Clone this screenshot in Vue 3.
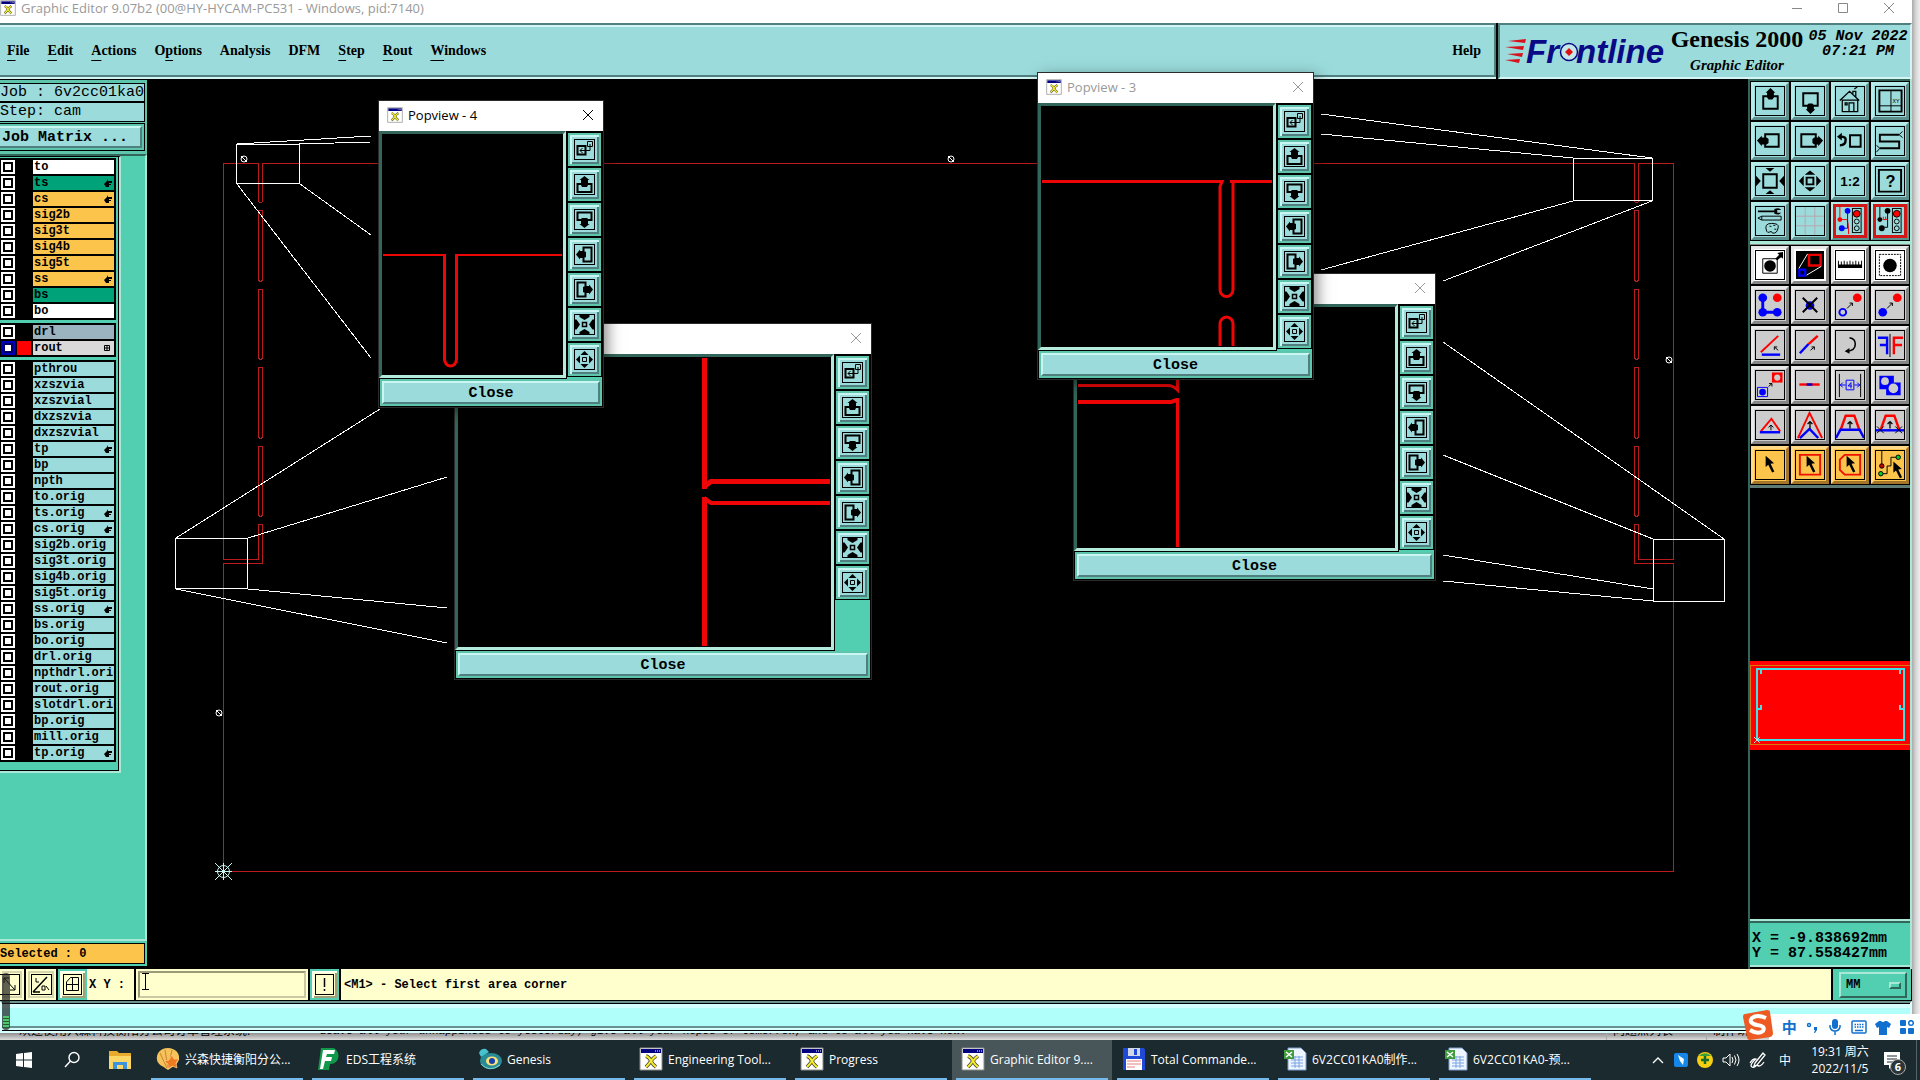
<script setup>
import { ref } from 'vue'

const menus = [
  ['', 'F', 'ile'], ['', 'E', 'dit'], ['', 'A', 'ctions'], ['O', 'p', 'tions'], ['Analysis', '', ''],
  ['DFM', '', ''], ['', 'S', 'tep'], ['', 'R', 'out'], ['', 'W', 'indows'],
]

const layer = (name, color, hand) => ({ name, color, hand })
const layerGroups = ref([
  [
    layer('to', 'white'), layer('ts', 'green', true), layer('cs', 'orange', true), layer('sig2b', 'orange'),
    layer('sig3t', 'orange'), layer('sig4b', 'orange'), layer('sig5t', 'orange'), layer('ss', 'orange', true),
    layer('bs', 'green'), layer('bo', 'white'),
  ],
  [layer('drl', 'steel'), { name: 'rout', color: 'silver', active: true }],
  [
    layer('pthrou'), layer('xzszvia'), layer('xzszvial'), layer('dxzszvia'), layer('dxzszvial'), layer('tp', '', true),
    layer('bp'), layer('npth'), layer('to.orig'), layer('ts.orig', '', true), layer('cs.orig', '', true),
    layer('sig2b.orig'), layer('sig3t.orig'), layer('sig4b.orig'), layer('sig5t.orig'), layer('ss.orig', '', true),
    layer('bs.orig'), layer('bo.orig'), layer('drl.orig'), layer('npthdrl.orig'), layer('rout.orig'),
    layer('slotdrl.orig'), layer('bp.orig'), layer('mill.orig'), layer('tp.orig', '', true),
  ],
])

const slots = [[210, 281], [289, 359], [367, 438], [446, 516]]

const cursor = 'M0 0v11.5l2.7-2.2 4 8 2.3-1.1-3.9-8 3.6-.5z'
const arrow = (x1, y1, x2, y2, hx, hy) =>
  `<path d="M${x1} ${y1}L${x2} ${y2}M${x2 - 3 * hx} ${y2}H${x2}V${y2 - 3 * hy}" fill="none" stroke="#000"/>`
const upArrow = '<path d="M14.5 18v-7M12 13.500l2.500-2.500 2.500 2.500" fill="none" stroke="#000" stroke-width="1.300"/>'
const light = (x) => `<rect x="${x}" y="1.500" width="9" height="25" fill="#9bdbdb" stroke="#000"/><circle cx="${x + 4.5}" cy="7" r="3.500" fill="red" stroke="#000"/><circle cx="${x + 4.5}" cy="15" r="2.500" fill="none" stroke="#000"/><circle cx="${x + 4.5}" cy="22" r="2.500" fill="none" stroke="#000"/>`

const viewTools = [
  ['Pan up', '<path d="M7.500 9.500h15v13h-15z" fill="none" stroke="#000" stroke-width="2"/><path d="M15 1l5 5h-1.500v5l-1.500 2h-4l-1.500-2V6H10z"/>'],
  ['Pan down', '<path d="M7.500 6.500h15v13h-15z" fill="none" stroke="#000" stroke-width="2"/><path d="M15 28l5-5h-1.500v-4l-1.500-2h-4l-1.500 2v4H10z"/>'],
  ['Home', '<path d="M4 14L14 4.500 24 14M6.500 13.500v12h16v-12zM13.500 25.500v-9h5v9M17.500 7V4.500h3V10M9.500 16.500h2v2h-2zM19 2l3-2" fill="none" stroke="#000" stroke-width="1.300"/>'],
  ['XY window', '<path d="M3.500 3.500h23v22h-23z" fill="none" stroke="#000" stroke-width="2"/><path d="M15.500 3v22M3 19.500h23" stroke="#000"/><text x="17" y="17" font-size="6" font-family="Liberation Mono">XY</text>'],
  ['Pan left', '<path d="M9.500 7.500h14v13h-14z" fill="none" stroke="#000" stroke-width="2"/><path d="M1 14l5-5v2h5l2 1.500v4l-2 1.500H6v2z"/>'],
  ['Pan right', '<path d="M5.500 7.500h15v13h-15z" fill="none" stroke="#000" stroke-width="2"/><path d="M28 14l-5-5v2h-4l-2 1.500v4l2 1.500h4v2z"/>'],
  ['Previous view', '<path d="M14.500 8.500h11v12h-11z" fill="none" stroke="#000" stroke-width="2"/><path d="M4 19q6 0 6-6 0-3-5-3" fill="none" stroke="#000" stroke-width="2.500"/><path d="M1 10l5-4v8z"/>'],
  ['Route', '<path d="M24 8H4v7h20v7H4" fill="none" stroke="#000" stroke-width="2"/><path d="M27.500 4.500L24 8l3.500 3M.500 19l3.500 3-3.500 4" fill="none" stroke="#000"/>'],
  ['Zoom in', '<path d="M7.500 7.500h14v14h-14z" fill="none" stroke="#000" stroke-width="2"/><path d="M10 1h9l-4.500 4zM10 28h9l-4.500-4zM0 9l5 5.500L0 20zM29 9l-5 5.500 5 5.500z"/>'],
  ['Zoom out', '<path d="M11 11h7v7h-7z" fill="none" stroke="#000" stroke-width="2"/><path d="M9 8h11l-5.500-4.500zM9 21h11l-5.500 4.500zM8 9l-5 5.500L8 20zM21 9l5 5.500-5 5.500z"/>'],
  ['Scale', '<text x="14.500" y="20" text-anchor="middle" font-size="14" font-weight="bold" font-family="Liberation Sans">1:2</text>'],
  ['Help', '<path d="M3 3h23v22.500H3z" fill="none" stroke="#000" stroke-width="2"/><text x="15" y="21" text-anchor="middle" font-size="17" font-weight="bold" font-family="Liberation Sans">?</text>'],
  ['Setup', '<path d="M2 3.500h17v2H2zM19 2q5-2 7 1h-4v3h4q-2 3-7 1z"/><path d="M2 11.500l4-2h20v4H6zM6 9.500v4M11 25q-3-8 5-8 8 0 7 4-1 7-6 6-1-3-3-1-2 1-3-1zM14 20h2M18 19h2M19 23h2" fill="none" stroke="#000"/>'],
  ['Grid', '<path d="M9.500 0v29M19.500 0v29M0 9.500h29M0 19.500h29" stroke="#b9a5ad"/>'],
  ['Net on', '<path d="M4 0v13h7q2 1 2 15" fill="none" stroke="red"/><path d="M12 5v17H6" fill="none" stroke="#00f"/><circle cx="12" cy="4" r="3" fill="#00f"/><circle cx="6" cy="22" r="3" fill="#00f"/><circle cx="4" cy="13" r="2.500" fill="red"/>' + light(17), 'alert'],
  ['Net check', '<path d="M4 0v13M12 4v17H6" fill="none" stroke="#000"/><path d="M7 13h5M7.500 10v3M10 10v3" stroke="red"/><circle cx="12" cy="4" r="3"/><circle cx="6" cy="22" r="3"/><circle cx="4" cy="13" r="2.500"/>' + light(17), 'alert'],
]

const editTools = [
  ['Select feature', '<path d="M7 8h15v15H7z" fill="none" stroke="#000"/><circle cx="14.500" cy="15.500" r="6"/><path d="M20 8l4-4-2-2 6-1v7l-2-1.500-4 3z"/>', 'white'],
  ['Popview', '<path d="M0 0h29v29H0z"/><path d="M13.500 4h12v11h-12z" fill="none" stroke="#e00" stroke-width="2.500"/><path d="M3.500 19.500h6v6h-6z" fill="none" stroke="#00f" stroke-width="2.500"/><path d="M3 18L12 3M11 25l15-9" stroke="#fff"/>', 'white bare'],
  ['Measure', '<path d="M2 17.500V10h1v4h2v-3h1v3h2v-4h1v4h2v-3h1v3h2v-4h1v4h2v-3h1v3h2v-4h1v4h2v-3h1v3h2v-4h1v7.500z"/>', 'white'],
  ['Highlight', '<path d="M3.500 3.500h22v22h-22z" fill="none" stroke="#000" stroke-dasharray="2 1"/><circle cx="14.500" cy="15" r="7"/>', 'white'],
  ['Connect', '<path d="M7 7v15h15" fill="none" stroke="#00f" stroke-width="3"/><circle cx="7" cy="7" r="4.500" fill="#00f"/><circle cx="7" cy="22" r="4.500" fill="#00f"/><circle cx="22" cy="22" r="4.500" fill="#00f"/><circle cx="22" cy="7" r="4.500" fill="red"/>'],
  ['Delete', '<circle cx="14.500" cy="15" r="4.500" fill="#00d"/><path d="M7 7l15 15M22 7L7 22" stroke="#000" stroke-width="2"/>'],
  ['Move', '<circle cx="22" cy="7" r="4.500" fill="red"/><circle cx="7" cy="22" r="3.500" fill="none" stroke="#00f" stroke-width="2"/>' + arrow(11.5, 18, 17, 12.5, 1, -1)],
  ['Copy', '<circle cx="22" cy="7" r="4.500" fill="red"/><circle cx="7" cy="22" r="4.500" fill="#00f"/>' + arrow(11.5, 18, 17, 12.5, 1, -1)],
  ['Rotate', '<path d="M5 22L23 5" stroke="red" stroke-width="2"/><path d="M6 24.500h19" stroke="#00f" stroke-width="2.500"/>' + arrow(23, 20, 19, 16.5, -1, -1)],
  ['Stretch', '<path d="M4 23l9-9.500" stroke="#00f" stroke-width="2.500"/><path d="M13 13.500L22.500 5" stroke="red" stroke-width="2.500"/>' + arrow(15, 20, 19, 16.5, 1, -1)],
  ['Turn', '<path d="M14 7q6 1 6 6.500 0 7-9 7.500" fill="none" stroke="#000" stroke-width="1.600"/><path d="M9 21l5-3.500v6z"/>'],
  ['Mirror', '<path d="M2 7h9.500v17M4 14.500h8" fill="none" stroke="#00f" stroke-width="2.500"/><path d="M14.500 3v24" stroke="#000"/><path d="M18.500 24V7H28M18.500 14.500H27" fill="none" stroke="red" stroke-width="2.500"/>'],
  ['Change', '<path d="M1.500 17h10.500v9.500H1.500z" fill="none" stroke="#00f"/><circle cx="6.800" cy="21.800" r="3.500" fill="#00f"/><path d="M16.500 1.500h11v10.500h-11z" fill="red"/><circle cx="22" cy="6.800" r="3.200" fill="#ccc"/>' + arrow(13, 16, 16.5, 13, 1, -1)],
  ['Break', '<path d="M3.500 14h21" stroke="red" stroke-width="2.500"/><path d="M11 14h6" stroke="#00c" stroke-width="2.500"/>'],
  ['Spacing', '<path d="M3.500 3v24M25.500 3v24" stroke="#000"/><path d="M10.500 9.500h8v10h-8zM4 14.500h6M19 14.500h6M7 12l-2.500 2.500L7 17M22 12l2.500 2.500L22 17M15.500 18v-6l-3 3.500h4" fill="none" stroke="#00f"/>'],
  ['Boolean', '<path d="M3.500 5h15v7h7v13h-15v-6h-7z" fill="#00f"/><circle cx="9.300" cy="10.500" r="4" fill="#ccc"/><circle cx="18" cy="18" r="5" fill="#ccc"/>'],
  ['Line angle', '<path d="M5 21L16 8l9 13" fill="none" stroke="red" stroke-width="2"/><path d="M4 22h21" stroke="#00f" stroke-width="2.500"/><path d="M15.500 20v-5M13 17l2.500-2.500L18 17" fill="none" stroke="#000"/>'],
  ['Line peak', '<path d="M2 28L14 2l13 26" fill="none" stroke="red" stroke-width="2"/><path d="M4 28l10-9.500L23 28" fill="none" stroke="#00f" stroke-width="2.500"/>' + upArrow],
  ['Line trapeze', '<path d="M5 19l5-14h9l5 14" fill="none" stroke="red" stroke-width="2.500"/><path d="M0 28l4.500-8.500h20L29 28" fill="none" stroke="#00f" stroke-width="2.500"/>' + upArrow],
  ['Line cut', '<path d="M5 19l5-14h9l5 14" fill="none" stroke="red" stroke-width="2.500"/><path d="M0 20h29" stroke="#00f" stroke-width="2.500"/><path d="M1 16l7 7M8 16l-7 7M20 16l7 7M27 16l-7 7" stroke="#000"/>' + upArrow],
  ['Single select', `<path transform="translate(10 5)" d="${cursor}"/>`, 'orange'],
  ['Frame select', `<path d="M4 4h21v20.500H4z" fill="none" stroke="#e10" stroke-width="2"/><path transform="translate(11 5)" d="${cursor}"/>`, 'orange'],
  ['Polygon select', `<path d="M9 4h16v20.500H9l-5-5V9z" fill="none" stroke="#e10" stroke-width="2"/><path transform="translate(11 5)" d="${cursor}"/>`, 'orange'],
  ['Net select', `<path d="M6 0v15M5 23.500h6.500v-8h4v-9H23" fill="none" stroke="#000"/><circle cx="6" cy="15.500" r="2.300" fill="#c00" stroke="#000"/><circle cx="5" cy="23.500" r="2.300" fill="#0c3" stroke="#000"/><circle cx="23" cy="6.500" r="2.300" fill="#0c3" stroke="#000"/><path transform="translate(18 11)" d="${cursor}"/>`, 'orange'],
]

const popTools = [
  ['Link', '<path d="M2.500 6h8v8.500h-8z" fill="none" stroke="#000" stroke-width="2"/><path d="M12.500 1.500h5v5h-5zM15 4v6.500H5M7.500 8L5 10.500 7.500 13" fill="none" stroke="#000"/>'],
  ['Pan up', '<path d="M6 9H2.500v8h14V9H13" fill="none" stroke="#000" stroke-width="2"/><path d="M9.500 1l5 4H13v5l-1 2H7l-1-2V5H4.500z"/>'],
  ['Pan down', '<path d="M6 10H2.500V2.500h14V10H13" fill="none" stroke="#000" stroke-width="2"/><path d="M9.500 18l5-4H13V9l-1-1H7L6 9v5H4.500z"/>'],
  ['Pan left', '<path d="M8.500 6V2.500h8v14h-8V13" fill="none" stroke="#000" stroke-width="2"/><path d="M1 9.500l4-5V6h4l2 1v5l-2 1H5v1.500z"/>'],
  ['Pan right', '<path d="M10.500 6V2.500h-8v14h8V13" fill="none" stroke="#000" stroke-width="2"/><path d="M18 9.500l-4-5V6h-4L8 7v5l2 1h4v1.500z"/>'],
  ['Zoom in', '<path d="M7.500 7.500h4v4h-4z" fill="none" stroke="#000" stroke-width="1.500"/><path d="M4.500 0h10v2l-5 3-5-3zM4.500 19h10v-2l-5-3-5 3zM0 4.500h1.500l3.500 5-3.500 5H0zM19 4.500h-1.500l-3.500 5 3.500 5H19z"/>'],
  ['Zoom out', '<path d="M7.500 7.500h4v4h-4z" fill="none" stroke="#000"/><path d="M5.500 5h8l-4-4zM5.500 14h8l-4 4zM5 5.500v8l-4-4zM14 5.500v8l4-4z"/>'],
]

const popviews = ref([
  { id: 1, title: 'Popview - 1', x: 1074, y: 274, w: 361, h: 248, active: false,
    art: '<path d="M1078 385.500h90q5 0 9.500 4.500V300M1177.500 398v149" stroke-width="3"/><path d="M1078 402h93l6-2" stroke-width="4"/>' },
  { id: 2, title: 'Popview - 2', x: 455, y: 324, w: 416, h: 297, active: false,
    art: '<path d="M704.500 358v131M704.500 497v149M705 486l6-4.500h119" stroke-width="5"/><path d="M704 498l7 5h119" stroke-width="4"/>' },
  { id: 3, title: 'Popview - 3', x: 1038, y: 73, w: 275, h: 248, active: false,
    art: '<path d="M1042 181.500h180l-2 5v103a6.500 7 0 0 0 13 0V181M1230 181.500h42M1220 346v-22a6.500 7 0 0 1 13 0v22" stroke-width="3"/>' },
  { id: 4, title: 'Popview - 4', x: 379, y: 101, w: 224, h: 248, active: true,
    art: '<path d="M383 255h62M455 255h107" stroke-width="2"/><path d="M444.500 254v105a6 7 0 0 0 12 0V254" stroke-width="3"/>' },
])
const closePopview = (id) => {
  popviews.value = popviews.value.filter((p) => p.id !== id)
}

const tasks = [
  { icon: 'shell', text: '兴森快捷衡阳分公...' },
  { icon: 'eds', text: 'EDS工程系统' },
  { icon: 'genesis', text: 'Genesis' },
  { icon: 'x', text: 'Engineering Tool...' },
  { icon: 'x', text: 'Progress' },
  { icon: 'x', text: 'Graphic Editor 9....', active: true },
  { icon: 'floppy', text: 'Total Commande...' },
  { icon: 'sheet', text: '6V2CC01KA0制作...' },
  { icon: 'sheet', text: '6V2CC01KA0-预...' },
]
const taskIcons = {
  shell: '<path d="M12 1C4 1 0 7 1 13c1 5 6 6 8 8l3 2 3-2c3-2 7-4 8-9C24 6 19 1 12 1z" fill="#f6c25b"/><path d="M11 21L4 6M12 21L9 3M12 21l4-18" stroke="#c98427" fill="none"/><path d="M16 8l2 4 5 0-3 4 1 5-5-2-4 3 0-5-4-3 5-1z" fill="#ef7a1f" stroke="#fbd08a" stroke-width=".7"/>',
  eds: '<path d="M4 1h13q6 4 4 11-2 5-8 5l-1 6H1z" fill="#12984b"/><path d="M6 3h12l-1 4h-7l-1 3h6l-1 4H8l-2 8H3z" fill="#fff"/>',
  genesis: '<ellipse cx="13" cy="14" rx="11" ry="8" fill="#2a8b96"/><ellipse cx="14" cy="14" rx="6" ry="4.500" fill="#fbe27a"/><circle cx="14" cy="14" r="3" fill="#1b3fae"/><path d="M1 6q2-5 7-4l3 3-8 5z" fill="#46c1cf"/><path d="M3 17q8 9 19 1" stroke="#7fe0d5" fill="none"/>',
  x: '<path d="M1 1h22v22H1z" fill="#fff" stroke="#8a8a8a"/><path d="M2 2h20v4H2z" fill="#000080"/><path d="M16 4h1M18 4h1M20 4h1" stroke="#fff"/><path d="M7 9q3 1 5 5t5 6M17 9q-3 2-5 5t-5 6" stroke="#333" stroke-width="3.500" fill="none"/><path d="M7 9q3 1 5 5t5 6M17 9q-3 2-5 5t-5 6" stroke="#f2ea2a" stroke-width="2.200" fill="none"/>',
  floppy: '<path d="M1 1h21l1 2v20H1z" fill="#2149d8"/><path d="M6 1h12v8H6z" fill="#cfd6e6"/><path d="M12 2h3v6h-3z" fill="#2149d8"/><path d="M4 12h16v11H4z" fill="#fff"/><path d="M5 14h14M5 17h14M5 20h8" stroke="#e58080"/>',
  sheet: '<path d="M5 1h13l5 5v17H5z" fill="#eef5ff" stroke="#7c9ccb"/><path d="M8 10h12M8 13h12M8 16h12M8 19h12M12 9v12M16 9v12" stroke="#7aa5e0"/><path d="M1 3h10v9H1z" fill="#3f9b3c"/><path d="M3 5l6 5M9 5l-6 5" stroke="#fff" stroke-width="1.500"/>',
}
const units = ref('MM')
const xy = ref('')
</script>

<template>
  <div class="desktop">
    <div class="screen">
      <div class="editor">
        <header class="titlebar">
          <svg class="app-icon" viewBox="0 0 24 24" v-html="taskIcons.x"></svg>
          <h1>Graphic Editor 9.07b2 (00@HY-HYCAM-PC531 - Windows, pid:7140)</h1>
          <div class="win-buttons">
            <button aria-label="Minimize"><svg width="12" height="12"><path d="M1 6.500h10" stroke="#888" /></svg></button>
            <button aria-label="Maximize"><svg width="12" height="12"><path d="M1.500 1.500h9v9h-9z" fill="none" stroke="#888" /></svg></button>
            <button aria-label="Close window"><svg width="12" height="12"><path d="M1 1l10 10M11 1L1 11" stroke="#888" /></svg></button>
          </div>
        </header>

        <div class="top">
          <nav class="menubar">
            <button v-for="m in menus" :key="m.join('')">{{ m[0] }}<u>{{ m[1] }}</u>{{ m[2] }}</button>
            <button class="help">Help</button>
          </nav>
          <div class="brand">
            <div class="logo">
              <svg width="24" height="26" fill="#d8121c"><path d="M3 2l18-2-1 4zM0 8l19-1-1 4zM2 15l16-1-1 4zM0 21l15-1-1 4z" /></svg>
              <span>Fr</span>
              <svg width="20" height="20"><circle cx="10" cy="10" r="8.500" fill="#c4e8ea" stroke="#0a0a86" stroke-width="1.500" /><path d="M10 6l4 4-4 4-4-4z" fill="#e01010" /></svg>
              <span>ntline</span>
            </div>
            <div class="product"><strong>Genesis 2000</strong><em>Graphic Editor</em></div>
            <time>05 Nov 2022<br>07:21 PM</time>
          </div>
        </div>

        <main class="workspace">
          <aside class="layers">
            <div class="job">
              <p>Job : 6v2cc01ka0</p>
              <p>Step: cam</p>
              <div class="matrix"><button>Job Matrix ...</button></div>
            </div>
            <div class="layer-area">
              <div class="layer-list">
                <ul v-for="(group, g) in layerGroups" :key="g">
                  <li v-for="l in group" :key="l.name">
                    <input :id="'layer-' + l.name" type="checkbox" :class="{ active: l.active }">
                    <span class="swatch" :class="{ active: l.active }"></span>
                    <label :for="'layer-' + l.name" :class="l.color">
                      {{ l.name }}
                      <svg v-if="l.hand" width="8" height="8"><path d="M0 5l3-3 1-2v2h4v2H5v1h2v1H5v2H2z" /></svg>
                      <svg v-if="l.active" width="8" height="8"><path d="M.500 1.500h5v5h-5zM3 1v6M0 4h6" fill="none" stroke="#000" /></svg>
                    </label>
                  </li>
                </ul>
              </div>
            </div>
            <p class="selected">Selected : 0</p>
          </aside>

          <section class="canvas">
            <svg class="drawing" shape-rendering="crispEdges">
              <g transform="translate(-147 -79)" fill="none">
                <g stroke="#b81c1c">
                  <path d="M223.500 560V163.500H258.500V201l1 1.500h2l1-1.500V163.500H1634.500V201l1 1.500h2l1-1.500V163.500H1673.500V560M223.500 564V871.500H1673.500V564" />
                  <template v-for="x in [258.5, 1634.5]" :key="x">
                    <path v-for="s in slots" :key="s[0]" :d="`M${x} ${s[0] + 1}l1-1h2l1 1V${s[1] - 1}l-1 1h-2l-1-1z`" />
                  </template>
                  <path d="M223 559.500H258.500V525l1-1h2l1 1V563.500H223M1674 559.500H1638.500V525l-1-1h-2l-1 1V563.500H1674" />
                </g>
                <g stroke="#fff">
                  <path d="M236.500 144.500h63v39h-63zM175.500 538.500h72v50h-72zM1573.500 158.500h79v42h-79zM1653.500 539.500h71v62h-71z" />
                  <path d="M237 144L371 136M299 144L371 142M237 184L371 358M300 184L371 235" />
                  <path d="M176 538L380 409M248 538L447 477M176 589L447 643M248 589L447 608" />
                  <path d="M1652 158L1321 114M1573 158L1321 134M1573 201L1321 270M1652 201L1443 281" />
                  <path d="M1724 539L1443 342M1653 539L1443 455M1653 589L1443 555M1653 601L1443 581" />
                </g>
                <g stroke="#fff" shape-rendering="auto">
                  <g v-for="p in [[244, 159], [951, 159], [219, 713], [1669, 360]]" :key="p[0]" :transform="`translate(${p[0]} ${p[1]})`">
                    <circle r="3" /><path d="M-3-3l6 6" />
                  </g>
                </g>
                <g stroke="#c8f4f4" shape-rendering="auto">
                  <circle cx="223.500" cy="871.500" r="6" />
                  <path d="M223.500 863v17M215 871.500h17M215 863l17 17M232 863l-17 17" />
                </g>
              </g>
            </svg>
          </section>

          <aside class="tools">
            <div class="palette view">
              <button v-for="t in viewTools" :key="t[0]" :aria-label="t[0]" :class="t[2]"><svg viewBox="0 0 29 29" v-html="t[1]"></svg></button>
            </div>
            <div class="palette edit">
              <button v-for="t in editTools" :key="t[0]" :aria-label="t[0]" :class="t[2]"><svg viewBox="0 0 29 29" v-html="t[1]"></svg></button>
            </div>
            <div class="overview">
              <svg width="160" height="89" shape-rendering="crispEdges">
                <path d="M0 0h160v89H0z" fill="red" />
                <path d="M0 4.500h160M.500 4v79.500H160" fill="none" stroke="#d87a10" />
                <path d="M7 8h147v71H7zM11 9v4M150 9v4M7 48h4v-4M154 48h-4v-4" fill="none" stroke="#45dfe6" stroke-width="2" />
                <path d="M4 76l6 6M10 76l-6 6" stroke="#cdd" />
              </svg>
            </div>
            <div class="coords">X = -9.838692mm<br>Y = 87.558427mm</div>
          </aside>
        </main>

        <div class="status">
          <button class="cream cut" aria-label="Snap ends"><svg width="19" height="19"><path d="M4 3l11 12M4 8V3h5M10 15h5v-5" fill="none" stroke="#000" /></svg></button>
          <button class="cream" aria-label="Snap off"><svg width="19" height="19"><path d="M1 17L15 2M1 17h7" fill="none" stroke="#000" stroke-width="1.500" /><path d="M4 3v4h3M10 11h3v4h-3zM14 11l3 4" fill="none" stroke="#000" /></svg></button>
          <button aria-label="Snap grid"><svg width="17" height="19"><path d="M2.500 7l4-4.500h8v13h-12zM8.500 2v14M2 9.500h13" fill="none" stroke="#000" /></svg></button>
          <label for="xy">X Y :</label>
          <div class="xy"><input id="xy" v-model="xy" type="text"><svg class="beam" width="7" height="17"><path d="M0 .500h7M0 16.500h7M3.500 0v17" stroke="#000" /></svg></div>
          <button aria-label="Message"><svg width="17" height="19"><path d="M8.500 3v9M8.500 14v2" stroke="#000" stroke-width="1.500" /></svg></button>
          <output>&lt;M1&gt; - Select first area corner</output>
          <div class="units">
            <select v-model="units" aria-label="Units"><option>MM</option><option>INCH</option></select>
            <i></i>
          </div>
        </div>
        <div class="message"></div>
      </div>
      <div class="edge"></div>

      <section v-for="p in popviews" :key="p.id" class="popview" :class="{ current: p.active }"
        :style="{ left: p.x + 'px', top: p.y + 'px', width: p.w + 'px' }">
        <header>
          <svg class="app-icon" viewBox="0 0 24 24" v-html="taskIcons.x"></svg>
          <h2>{{ p.title }}</h2>
          <button aria-label="Close popview" @click="closePopview(p.id)"><svg width="12" height="12"><path d="M1 1l10 10M11 1L1 11" stroke="currentColor" /></svg></button>
        </header>
        <div class="pop-body" :style="{ height: p.h + 'px' }">
          <div class="pop-canvas">
            <svg><g :transform="`translate(${-p.x - 3} ${-p.y - 33})`" fill="none" stroke="#ee0606" v-html="p.art"></g></svg>
          </div>
          <div class="pop-tools">
            <button v-for="t in popTools" :key="t[0]" :aria-label="t[0]"><svg viewBox="0 0 19 19" v-html="t[1]"></svg></button>
          </div>
        </div>
        <div class="pop-close"><button @click="closePopview(p.id)">Close</button></div>
      </section>

      <div class="level"><span></span></div>
    </div>

    <div class="behind">
      <span class="greet">欢迎使用兴森科技衡阳分公司订单管理系统!</span>
      <em>Leave all your unhappiness to yesterday, give all your hopes of tomorrow, and to all you have now.</em>
      <span class="tab">问题点列表</span>
      <span class="tab">制作研</span>
    </div>

    <footer class="taskbar">
      <button class="sys" aria-label="Start"><svg width="16" height="16" fill="#fff"><path d="M0 2l7-1v6.500H0zM8 1l8-1v7.500H8zM0 8.500h7V15l-7-1zM8 8.500h8V16l-8-1z" /></svg></button>
      <button class="sys" aria-label="Search"><svg width="18" height="18" fill="none" stroke="#fff" stroke-width="1.400"><circle cx="11" cy="6.500" r="5" /><path d="M7.500 10L2 16" /></svg></button>
      <button class="sys" aria-label="Explorer"><svg width="24" height="20"><path d="M1 1h8l2 2h12v16H1z" fill="#e8ab2c" /><path d="M1 6h22v13H1z" fill="#fcd768" /><path d="M5 19v-7h14v7h-4v-4h-6v4z" fill="#3f93dd" /></svg></button>
      <button v-for="t in tasks" :key="t.text" class="task" :class="{ active: t.active }">
        <svg width="24" height="24" v-html="taskIcons[t.icon]"></svg><span>{{ t.text }}</span>
      </button>
      <div class="tray">
        <svg width="14" height="20" fill="none" stroke="#fff" stroke-width="1.300"><path d="M2 13l5-5 5 5" /></svg>
        <svg width="14" height="14"><rect width="14" height="14" rx="2" fill="#1687ea" /><path d="M4 2l6 4-1 6-3-4z" fill="#fff" /></svg>
        <svg width="16" height="16"><circle cx="8" cy="8" r="8" fill="#f4cf12" /><path d="M2 4a8 8 0 0 1 12 0z" fill="#3aa03a" /><path d="M8 4v8M4 8h8" stroke="#156b2b" stroke-width="2.500" /></svg>
        <svg width="18" height="16" fill="none" stroke="#fff"><path d="M1 6h3l4-4v12l-4-4H1zM10 5q2 3 0 6M12.500 3.500q3 4.500 0 9M15 2q4 6 0 12" /></svg>
        <svg width="18" height="18" fill="none" stroke="#fff" stroke-width="1.300"><path d="M6 12L14 2l2 2-8 10-3 1zM1 12q3-5 6-4-5 4-5 7 2 3 6-1 3 3 7-3" /></svg>
        <span class="ime">中</span>
        <div class="clock">19:31 周六<br>2022/11/5</div>
        <div class="notice">
          <svg width="16" height="17"><path d="M0 0h16v13H9l-4 4v-4H0z" fill="#fff" /><path d="M3 4h10M3 7h10M3 10h6" stroke="#1b2a30" /></svg>
          <b>6</b>
        </div>
      </div>
    </footer>

    <div class="sogou">
      <svg width="30" height="32"><path d="M2 5l22-4q3 0 3 2l3 21q0 3-3 4L7 31q-3 0-3-3L0 8q0-3 2-3z" fill="#ee5a24" /><path d="M23 9Q14 5 9 9q-4 5 5 7 9 1 6 6-5 4-13-1" fill="none" stroke="#fff" stroke-width="4" /></svg>
      <span>中</span>
      <svg width="14" height="14" fill="#1170cf"><circle cx="4" cy="5" r="1.500" fill="none" stroke="#1170cf" stroke-width="1.500" /><path d="M9 7h3v3l-2 3H9l1-3H9z" /></svg>
      <svg width="14" height="16" fill="#1170cf"><rect x="4" width="6" height="10" rx="3" /><path d="M2 6v2q1 4 5 4t5-4V6M7 12v4" fill="none" stroke="#1170cf" stroke-width="1.500" /></svg>
      <svg width="16" height="14" fill="none" stroke="#1170cf"><rect x="1" y="1" width="14" height="12" rx="1" stroke-width="1.500" /><path d="M3.500 4.500h9M3.500 7h9" stroke-width="1.500" stroke-dasharray="1.500 1" /><path d="M4 10.500h8" stroke-width="1.500" /></svg>
      <svg width="16" height="15" fill="#1170cf"><path d="M4 1h2q2 2 4 0h2l4 3-2 4-2-1v8H4V7L2 8 0 4z" /></svg>
      <svg width="14" height="14" fill="#1170cf"><rect width="6" height="6" rx="1" /><rect y="8" width="6" height="6" rx="1" /><rect x="8" y="8" width="6" height="6" rx="1" /><circle cx="11" cy="3" r="2.300" fill="none" stroke="#1170cf" stroke-width="1.500" /></svg>
    </div>
  </div>
</template>

<style>
body {
  margin: 0;
  overflow: hidden;
}
</style>

<style scoped>
.desktop {
  --aqua: #9bdbdb;
  --aqua-hi: #c9f6f2;
  --aqua-lo: #4f7f7f;
  --green: #52ceb0;
  --green-hi: #a9e8d6;
  --green-lo: #33665a;
  --mono: "Liberation Mono", monospace;
  position: relative;
  display: flex;
  flex-direction: column;
  height: 100vh;
  overflow: hidden;
  font-family: "Open Sans", "Noto Sans CJK SC", sans-serif;
  font-size: 12px;
  color: #000;
}

.desktop * {
  box-sizing: border-box;
}

button, input, select {
  margin: 0;
  padding: 0;
  border: 0;
  border-radius: 0;
  background: none;
  color: inherit;
  font: inherit;
}

h1, h2, p, ul {
  margin: 0;
  padding: 0;
  font-weight: normal;
}

svg {
  flex: none;
  display: block;
}

.screen {
  position: relative;
  flex: 1;
  min-height: 0;
  display: flex;
}

.editor {
  flex: 1;
  min-width: 0;
  display: flex;
  flex-direction: column;
  background: #000;
}

.edge {
  width: 8px;
  background: linear-gradient(90deg, #aaa, #d8d8d8 50%, #eee);
}

/* window title */
.titlebar {
  height: 23px;
  display: flex;
  align-items: center;
  padding-bottom: 8px;
  background: #fff;
  color: #999;
}

.app-icon {
  width: 16px;
  height: 16px;
}

.titlebar h1 {
  flex: 1;
  margin-left: 5px;
  font-size: 13px;
}

.win-buttons {
  display: flex;
  gap: 34px;
  padding-right: 17px;
}

/* menu and brand */
.top {
  display: flex;
  height: 56px;
}

.menubar, .brand {
  border: 2px solid;
  border-color: var(--aqua-lo) var(--aqua-lo) var(--aqua-lo) var(--aqua);
  box-shadow: inset 0 2px #d3f6f4, 0 2px #d3f6f4;
  background: var(--aqua);
}

.menubar {
  flex: 1;
  display: flex;
  align-items: center;
  gap: 18px;
  height: 54px;
  padding: 2px 13px 0 7px;
  border-left: 0;
  font: bold 14px "Liberation Serif", serif;
}

.menubar u {
  text-underline-offset: 5px;
}

.help {
  margin-left: auto;
}

.brand {
  display: flex;
  width: 414px;
  height: 56px;
  margin-left: 2px;
  padding-left: 5px;
  border-left-color: var(--aqua-lo);
  border-right-color: #d3f6f4;
  border-bottom-color: #d3f6f4;
  box-shadow: none;
}

.logo {
  display: flex;
  align-items: center;
  width: 160px;
  height: 54px;
  color: #0a0a86;
  font: italic bold 33px "Liberation Sans", sans-serif;
}

.logo svg + span {
  margin-left: -3px;
}

.product {
  display: flex;
  flex-direction: column;
  align-items: center;
  width: 138px;
  margin-left: 3px;
  padding-top: 1px;
  font-family: "Liberation Serif", serif;
  line-height: 26px;
}

.product strong {
  font-size: 24px;
  white-space: nowrap;
}

.product em {
  font-weight: bold;
  font-size: 15px;
}

.brand time {
  flex: 1;
  margin-top: 4px;
  font: italic bold 15px/15px var(--mono);
  text-align: center;
  white-space: nowrap;
}

/* left column */
.workspace {
  flex: 1;
  min-height: 0;
  display: flex;
}

.layers {
  width: 147px;
  display: flex;
  flex-direction: column;
  margin-bottom: 3px;
  background: var(--green);
}

.job {
  padding: 3px 2px 3px 0;
  border-top: 1px solid #000;
  background: #5fc4ac;
  font: bold 15px/17px var(--mono);
  white-space: pre;
}

.job p {
  height: 19px;
  border: 1px solid #000;
  border-width: 1px 1px 1px 0;
  background: var(--aqua);
}

.job p + p {
  height: 20px;
}

.matrix {
  height: 28px;
  margin-top: 1px;
  padding: 2px 2px 2px 0;
  border: 1px solid #000;
  border-left: 0;
}

.matrix button {
  width: 100%;
  height: 22px;
  padding-left: 2px;
  border: 2px solid;
  border-color: var(--aqua-hi) var(--aqua-lo) var(--aqua-lo) var(--aqua-hi);
  border-left: 0;
  background: var(--aqua);
  text-align: left;
}

.layer-area {
  flex: 1;
  border-top: 2px solid var(--green-lo);
  border-right: 2px solid var(--green-hi);
  border-bottom: 2px solid var(--green-hi);
}

.layer-list {
  width: 121px;
  padding: 1px 2px 9px 0;
  border-top: 1px solid #000;
  border-right: 2px solid var(--green-hi);
  border-bottom: 2px solid var(--green-hi);
  box-shadow: inset -1px -1px #000;
}

.layer-list ul {
  width: 116px;
  padding: 2px 2px 0 1px;
  background: #000;
  list-style: none;
}

.layer-list ul + ul {
  margin-top: 3px;
}

.layer-list li {
  display: flex;
  gap: 2px;
  height: 14px;
  padding-bottom: 2px;
  box-sizing: content-box;
}

.layer-list input {
  appearance: none;
  width: 14px;
  height: 14px;
  border: 2px solid #fff;
  background: #fff;
  box-shadow: inset 0 0 0 2px #000;
}

.layer-list input.active {
  border-color: #00b;
  box-shadow: inset 0 0 0 2px #00006a;
}

.swatch {
  width: 14px;
}

.swatch.active {
  background: red;
}

.layer-list label {
  flex: 1;
  min-width: 0;
  display: flex;
  align-items: center;
  justify-content: space-between;
  padding: 0 2px 0 1px;
  overflow: hidden;
  background: var(--aqua);
  font: bold 12px/14px var(--mono);
  white-space: nowrap;
}

.layer-list label.white { background: #fff; }
.layer-list label.green { background: #00a27a; }
.layer-list label.orange { background: #fdc44c; }
.layer-list label.steel { background: #9ab3bf; }
.layer-list label.silver { background: #d9d9d9; }

.selected {
  height: 21px;
  margin: 2px 2px 2px 0;
  border: 1px solid #000;
  border-left: 0;
  background: #fdc44c;
  font: bold 12px/20px var(--mono);
}

/* canvas */
.canvas {
  position: relative;
  flex: 1;
  min-width: 0;
}

.drawing {
  position: absolute;
  inset: 0;
  width: 100%;
  height: 100%;
}

/* right column */
.tools {
  width: 164px;
  display: flex;
  flex-direction: column;
  border-left: 2px solid var(--green-lo);
  border-right: 2px solid var(--green-hi);
}

.palette {
  display: grid;
  grid-template-columns: repeat(4, 38px);
  gap: 2px;
  padding: 1px 0 1px 1px;
  border-top: 2px solid var(--green-lo);
  border-bottom: 3px solid var(--green-hi);
}

.palette.edit {
  padding: 1px 0 1px 1px;
  border-top: 1px solid #888;
  border-bottom: 3px solid #5d7a74;
}

.palette button {
  height: 38px;
  padding: 1px;
  border: 3px solid;
  border-color: #b5ecea #5c8e8e #5c8e8e #b5ecea;
  background: var(--aqua);
}

.palette svg {
  width: 30px;
  height: 30px;
  border: 1px solid #000;
}

.palette.edit button {
  border-color: #e8e8e8 #858585 #858585 #e8e8e8;
  background: #ccc;
}

.palette.edit button.white {
  background: #fff;
}

.palette.edit button.orange {
  border-color: #ffd987 #a5762a #a5762a #ffd987;
  background: #fdc44c;
}

.palette .bare svg {
  border-color: #fff;
}

.palette .alert svg {
  border-color: #d01818;
  outline: 2px solid #d01818;
}

.overview {
  flex: 1;
  padding-top: 173px;
  border-bottom: 2px solid var(--green-hi);
}

.coords {
  height: 46px;
  margin-bottom: 2px;
  padding: 8px 0 0 2px;
  border-top: 2px solid var(--green-lo);
  border-bottom: 2px solid var(--green-hi);
  background: var(--green);
  font: bold 15px/15px var(--mono);
  white-space: nowrap;
}

/* command line */
.status {
  display: flex;
  gap: 2px;
  height: 32px;
  border-bottom: 1px solid #000;
  font: bold 12px/33px var(--mono);
}

.status > button {
  display: flex;
  align-items: center;
  justify-content: center;
  width: 29px;
  border: 2px solid var(--green);
  background: #ffffce;
  box-shadow: inset 2px 2px #fffff0, inset -2px -2px #9f9f7a;
}

.status > button.cream {
  width: 30px;
  border-color: #ffffce;
  box-shadow: inset 0 0 0 2px #d6d6ae;
}

.status > button.cut {
  width: 24px;
  justify-content: flex-end;
  padding-right: 3px;
}

.status > button svg {
  outline: 1px solid #000;
}

.status label {
  width: 47px;
  margin-left: -2px;
  padding-left: 2px;
  background: #ffffce;
}

.xy {
  position: relative;
  width: 172px;
  padding: 2px;
  background: #ffffce;
}

.xy input {
  display: block;
  width: 100%;
  height: 27px;
  border: 2px solid;
  border-color: #9a9a78 #c9c9a3 #c9c9a3 #9a9a78;
}

.beam {
  position: absolute;
  left: 6px;
  top: 4px;
}

.status output {
  flex: 1;
  padding-left: 3px;
  background: #ffffce;
}

.units {
  display: flex;
  position: relative;
  width: 79px;
  padding: 3px 4px 2px 6px;
  background: var(--green);
  border-right: 1px solid #000;
}

.units select {
  appearance: none;
  width: 100%;
  height: 26px;
  padding: 0 0 0 5px;
  border: 2px solid;
  border-color: var(--green-hi) var(--green-lo) var(--green-lo) var(--green-hi);
  line-height: 22px;
}

.units i {
  position: absolute;
  right: 10px;
  top: 13px;
  width: 12px;
  height: 7px;
  border: 2px solid;
  border-color: var(--green-hi) var(--green-lo) var(--green-lo) var(--green-hi);
}

.message {
  height: 32px;
  border: 2px solid;
  border-color: #6b9490 #d9ffff #d9ffff #d9ffff;
  background: #b0fffb;
  box-shadow: inset 0 1px #000, inset 0 5px #d5ffff, inset 0 -1px #000, inset 0 -3px #d5ffff, inset 0 -5px #68928f;
}

/* popviews */
.popview {
  position: absolute;
  display: flex;
  flex-direction: column;
  background: #000;
  box-shadow: 0 0 0 1px #2b2b2b, 4px 4px 14px rgba(0, 0, 0, .5);
}

.popview header {
  display: flex;
  align-items: center;
  height: 30px;
  padding: 0 9px 2px 8px;
  background: #fff;
  color: #999;
}

.popview.current header {
  color: #000;
}

.popview h2 {
  flex: 1;
  margin-left: 5px;
  font-size: 13px;
}

.pop-body {
  display: flex;
}

.pop-canvas {
  flex: 1;
  min-width: 0;
  margin-bottom: 1px;
  border: 3px solid;
  border-color: var(--green-lo) #b5ebdc #b5ebdc var(--green-lo);
}

.pop-canvas svg {
  width: 100%;
  height: 100%;
}

.pop-tools {
  display: flex;
  flex-direction: column;
  gap: 2px;
  width: 35px;
  margin: 2px 1px 0 1px;
  padding-left: 1px;
  background: linear-gradient(#000 244px, var(--green) 244px);
}

.pop-tools button, .pop-close {
  border: 2px solid #5fc4ac;
}

.pop-tools button {
  width: 33px;
  height: 33px;
  padding: 4px;
  background: var(--aqua);
  box-shadow: inset 2px 2px var(--aqua-hi), inset -2px -2px var(--aqua-lo);
}

.pop-tools button svg {
  width: 21px;
  height: 21px;
  border: 1px solid #000;
}

.pop-close {
  height: 27px;
  margin: 0 1px 1px;
}

.pop-close button {
  display: block;
  width: 100%;
  height: 23px;
  padding-top: 2px;
  border: 2px solid;
  border-color: var(--aqua-hi) var(--aqua-lo) var(--aqua-lo) var(--aqua-hi);
  background: var(--aqua);
  font: bold 15px/17px var(--mono);
}

/* microphone level overlay */
.level {
  position: absolute;
  left: 2px;
  bottom: 3px;
  width: 8px;
  height: 57px;
  padding: 43px 1px 2px;
  border-radius: 4px;
  background: rgba(30, 30, 30, .7);
}

.level span {
  display: block;
  height: 12px;
  background: repeating-linear-gradient(#4fc46c 0 2px, #245c34 2px 3px);
}

/* page behind the editor */
.behind {
  display: flex;
  align-items: flex-end;
  height: 7px;
  padding-left: 19px;
  overflow: hidden;
  background: linear-gradient(#8f8f8f, #ddd);
  line-height: 18px;
  white-space: nowrap;
}

.greet {
  width: 301px;
}

.behind em {
  flex: 1;
  font-family: var(--mono);
  font-size: 11px;
}

.tab {
  width: 100px;
  padding-left: 6px;
  border-left: 1px solid #aaa;
}

.tab:last-child {
  width: 214px;
}

/* taskbar */
.taskbar {
  display: flex;
  height: 40px;
  background: #1b2a2f;
  color: #fff;
}

.sys {
  display: flex;
  align-items: center;
  justify-content: center;
  width: 48px;
}

.task {
  display: flex;
  align-items: center;
  gap: 5px;
  width: 152px;
  margin-left: 9px;
  padding-left: 5px;
  border-bottom: 2px solid #76b9ed;
  white-space: nowrap;
}

.sys + .task {
  margin-left: 7px;
}

.task.active {
  background: #48565a;
  box-shadow: 4px 0 #48565a, -4px 0 #48565a;
}

.tray {
  display: flex;
  align-items: center;
  gap: 9px;
  margin-left: auto;
  padding-right: 3px;
}

.ime {
  width: 18px;
  text-align: center;
}

.clock {
  width: 66px;
  margin-left: 4px;
  text-align: center;
  line-height: 17px;
}

.notice {
  position: relative;
  width: 35px;
  height: 40px;
  padding: 12px 0 0 2px;
  border-right: 1px solid #56646a;
}

.notice b {
  position: absolute;
  left: 8px;
  top: 19px;
  width: 16px;
  height: 16px;
  border: 1px solid #aaa;
  border-radius: 8px;
  background: #2b3438;
  font-size: 11px;
  line-height: 14px;
  text-align: center;
}

/* input method bar */
.sogou {
  position: absolute;
  right: 0;
  bottom: 40px;
  display: flex;
  align-items: center;
  justify-content: space-between;
  width: 151px;
  height: 26px;
  padding: 0 6px 0 0;
  background: #fff;
  color: #1170cf;
  font: bold 15px/24px "Noto Sans CJK SC", sans-serif;
}

.sogou svg:first-child {
  margin: -4px 0 0 -26px;
}
</style>
